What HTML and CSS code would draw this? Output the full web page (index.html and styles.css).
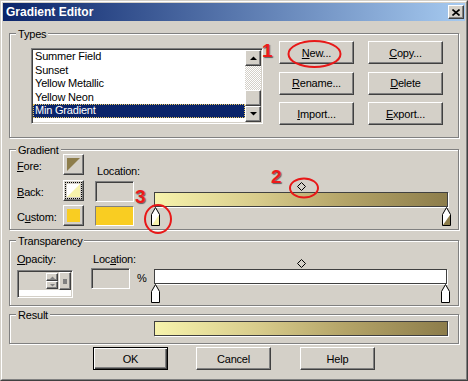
FILE: index.html
```html
<!DOCTYPE html>
<html>
<head>
<title>Gradient Editor</title>
<link rel="stylesheet" href="styles.css">
</head>

<body>

<div class="window">
<div class="frame">

<div class="titleBar">
<span class="titleText">Gradient Editor</span>
<span class="closeBtn raised">
<svg width="8" height="7" viewBox="0 0 8 7"><path d="M0.5 0.5 L7.5 6.5 M7.5 0.5 L0.5 6.5" stroke="#000" stroke-width="1.6"/></svg>
</span>
</div>

<div class="content">

<div class="group typesGroup">
<span class="groupLabel">Types</span>
<div class="listBox">
<div class="listItems">
<div class="listItem">Summer Field</div>
<div class="listItem">Sunset</div>
<div class="listItem">Yellow Metallic</div>
<div class="listItem">Yellow Neon</div>
<div class="listItem selected">Min Gradient</div>
</div>
<div class="scrollBar">
<div class="scrollBtn raised">
<svg width="7" height="4" viewBox="0 0 7 4"><path d="M0 4 L7 4 L3.5 0.5 Z" fill="#000"/></svg>
</div>
<div class="scrollTrack"></div>
<div class="scrollThumb raised"></div>
<div class="scrollBtn raised">
<svg width="7" height="4" viewBox="0 0 7 4"><path d="M0 0 L7 0 L3.5 3.5 Z" fill="#000"/></svg>
</div>
</div>
</div>
<div class="typeButtons">
<button class="btn"><u>N</u>ew...</button>
<button class="btn"><u>C</u>opy...</button>
<button class="btn"><u>R</u>ename...</button>
<button class="btn"><u>D</u>elete</button>
<button class="btn"><u>I</u>mport...</button>
<button class="btn"><u>E</u>xport...</button>
</div>
</div>

<div class="group gradientGroup">
<span class="groupLabel">Gradient</span>
<div class="swatchGrid">
<span class="swatchLabel"><u>F</u>ore:</span>
<span class="swatchBtn raised">
<svg width="13" height="13" viewBox="0 0 13 13"><path d="M0 0 H13 L0 13 Z" fill="#8d7d4b"/></svg>
</span>
<span class="swatchLabel"><u>B</u>ack:</span>
<span class="swatchBtn raised focused">
<svg width="13" height="13" viewBox="0 0 13 13"><rect width="13" height="13" fill="#fff"/><path d="M13 0 V13 H0 Z" fill="#f7f3ac"/></svg>
</span>
<span class="swatchLabel">C<u>u</u>stom:</span>
<span class="swatchBtn raised">
<span class="customChip"></span>
</span>
</div>
<div class="locCol">
<span class="locLabel">Location:</span>
<span class="field"></span>
<span class="customSwatch"></span>
</div>
<div class="barWrap">
<svg class="diamond" width="9" height="9" viewBox="0 0 9 9"><path d="M4.5 0.5 L8.5 4.5 L4.5 8.5 L0.5 4.5 Z" fill="none" stroke="#000"/></svg>
<div class="bar gradientFill"></div>
<svg class="stop stopLeft" width="11" height="20" viewBox="0 0 11 20">
<path d="M5.5 0.5 L9.5 7.5 V18.5 H1.5 V7.5 Z" fill="#fff" stroke="#000"/>
<path d="M9 8 V18 H2 Z" fill="#f7f3ac"/>
</svg>
<svg class="stop stopRight" width="11" height="20" viewBox="0 0 11 20">
<path d="M5.5 0.5 L9.5 7.5 V18.5 H1.5 V7.5 Z" fill="#fff" stroke="#000"/>
<path d="M9 8 V18 H2 Z" fill="#8d7d4b"/>
</svg>
</div>
</div>

<div class="group transGroup">
<span class="groupLabel">Transparency</span>
<div class="opacityCol">
<span class="colLabel"><u>O</u>pacity:</span>
<div class="spinBox">
<div class="spinTop">
<span class="spinEdit"></span>
<span class="spinArrows">
<span class="spinArrow raised"><svg width="5" height="3" viewBox="0 0 5 3"><path d="M0 3 H5 L2.5 0.5 Z" fill="#808080"/></svg></span>
<span class="spinArrow raised"><svg width="5" height="3" viewBox="0 0 5 3"><path d="M0 0 H5 L2.5 2.5 Z" fill="#808080"/></svg></span>
</span>
<span class="spinSlider raised"><span class="sliderDot"></span></span>
</div>
<div class="spinBottom"></div>
</div>
</div>
<div class="transLocCol">
<span class="locLabel">Loc<u>a</u>tion:</span>
<span class="field transField"></span>
</div>
<span class="pct">%</span>
<div class="barWrap transBar">
<svg class="diamond" width="9" height="9" viewBox="0 0 9 9"><path d="M4.5 0.5 L8.5 4.5 L4.5 8.5 L0.5 4.5 Z" fill="none" stroke="#000"/></svg>
<div class="bar whiteFill"></div>
<svg class="stop stopLeft" width="11" height="20" viewBox="0 0 11 20">
<path d="M5.5 0.5 L9.5 7.5 V18.5 H1.5 V7.5 Z" fill="#fff" stroke="#000"/>
</svg>
<svg class="stop stopRight" width="11" height="20" viewBox="0 0 11 20">
<path d="M5.5 0.5 L9.5 7.5 V18.5 H1.5 V7.5 Z" fill="#fff" stroke="#000"/>
</svg>
</div>
</div>

<div class="group resultGroup">
<span class="groupLabel">Result</span>
<div class="bar gradientFill resultBar"></div>
</div>

<div class="dialogButtons">
<button class="btn defaultBtn">OK</button>
<button class="btn cancelBtn">Cancel</button>
<button class="btn helpBtn">Help</button>
</div>

</div>
</div>

<!-- red tutorial markings drawn over the dialog -->
<svg class="annotations" width="468" height="381" viewBox="0 0 468 381">
<ellipse cx="313.5" cy="53" rx="26" ry="13" fill="none" stroke="#e81818" stroke-width="2"/>
<ellipse cx="303" cy="187" rx="14" ry="9.5" fill="none" stroke="#e81818" stroke-width="2"/>
<ellipse cx="157" cy="218" rx="13" ry="14" fill="none" stroke="#e81818" stroke-width="2"/>
</svg>
<span class="mark markOne">1</span>
<span class="mark markTwo">2</span>
<span class="mark markThree">3</span>

</div>

</body>
</html>
```

FILE: styles.css
```css
body {
    margin: 0;
    background: #d4d0c8;
    font: 11px "Liberation Sans", Arial, sans-serif;
    letter-spacing: -0.2px;
    color: #000;
}
.window {
    position: relative;
    width: 468px;
    height: 381px;
    box-sizing: border-box;
    border: 1px solid;
    border-color: #d4d0c8 #404040 #404040 #d4d0c8;
}
.frame {
    height: 100%;
    box-sizing: border-box;
    border: 1px solid;
    border-color: #fff #808080 #808080 #fff;
    padding: 1px;
}
.raised {
    box-sizing: border-box;
    background: #d4d0c8;
    border: 1px solid;
    border-color: #fff #404040 #404040 #fff;
    box-shadow: inset -1px -1px 0 #808080;
}
.titleBar {
    height: 18px;
    display: flex;
    align-items: center;
    justify-content: space-between;
    padding: 0 1px 0 3px;
    background: linear-gradient(to right, #0a246a, #a6caf0);
}
.titleText {
    color: #fff;
    font-weight: bold;
    font-size: 12px;
    letter-spacing: 0;
}
.closeBtn {
    width: 16px;
    height: 14px;
    display: flex;
    align-items: center;
    justify-content: center;
}
.content {
    padding: 12px 6px 0;
}
.group {
    position: relative;
    box-sizing: border-box;
    border: 1px solid #808080;
    box-shadow: 1px 1px 0 #fff, inset 1px 1px 0 #fff;
}
.groupLabel {
    position: absolute;
    top: -6px;
    left: 6px;
    padding: 0 2px;
    line-height: 13px;
    background: #d4d0c8;
}

/* Types */
.typesGroup {
    height: 105px;
    display: flex;
    align-items: flex-start;
    padding-left: 21px;
}
.listBox {
    margin-top: 14px;
    width: 232px;
    height: 76px;
    box-sizing: border-box;
    display: flex;
    padding: 1px;
    background: #fff;
    border: 1px solid;
    border-color: #808080 #fff #fff #808080;
    box-shadow: inset 1px 1px 0 #404040, inset -1px -1px 0 #d4d0c8;
}
.listItems {
    flex: 1;
}
.listItem {
    line-height: 13.5px;
    padding-left: 2px;
    white-space: nowrap;
}
.listItem.selected {
    background: #0a246a;
    color: #fff;
    outline: 1px dotted #e8c860;
    outline-offset: -1px;
}
.scrollBar {
    width: 16px;
    display: flex;
    flex-direction: column;
}
.scrollBtn {
    height: 16px;
    display: flex;
    align-items: center;
    justify-content: center;
}
.scrollTrack {
    flex: 1;
    background: repeating-conic-gradient(#fff 0 25%, #d4d0c8 0 50%) 0 0 / 2px 2px;
}
.scrollThumb {
    height: 16px;
}
.typeButtons {
    margin: 7px 0 0 16px;
    display: grid;
    grid-template-columns: 75px 75px;
    grid-auto-rows: 23px;
    column-gap: 14px;
    row-gap: 7.5px;
}
.btn {
    font: inherit;
    letter-spacing: inherit;
    margin: 0;
    padding: 0;
    color: #000;
    background: #d4d0c8;
    border: 1px solid;
    border-color: #fff #404040 #404040 #fff;
    box-shadow: inset -1px -1px 0 #808080;
}

/* Gradient */
.gradientGroup {
    margin-top: 11px;
    height: 81px;
    display: flex;
    align-items: flex-start;
    padding-left: 7px;
}
.swatchGrid {
    margin-top: 4px;
    display: grid;
    grid-template-columns: 46px 21px;
    grid-auto-rows: 21px;
    row-gap: 4.5px;
}
.swatchLabel {
    padding-top: 3px;
    line-height: 18px;
}
.swatchBtn {
    display: flex;
    align-items: center;
    justify-content: center;
}
.swatchBtn.focused {
    outline: 1px dotted #000;
    outline-offset: -3px;
}
.customChip {
    width: 13px;
    height: 13px;
    background: #f9cd22;
}
.locCol {
    margin: 4px 0 0 11px;
    width: 39px;
    display: flex;
    flex-direction: column;
}
.locLabel,
.colLabel {
    line-height: 13px;
    white-space: nowrap;
}
.locCol .locLabel {
    margin-top: 11px;
    padding-left: 2px;
}
.field {
    height: 21px;
    box-sizing: border-box;
    border: 1px solid;
    border-color: #808080 #fff #fff #808080;
    box-shadow: inset 1px 1px 0 #404040, inset -1px -1px 0 #d4d0c8;
}
.locCol .field {
    margin-top: 3px;
}
.customSwatch {
    margin-top: 4px;
    height: 20px;
    box-sizing: border-box;
    background: #f9cd22;
    border: 1px solid;
    border-color: #808080 #fff #fff #808080;
}
.barWrap {
    position: relative;
    margin: 42px 0 0 20px;
    width: 294px;
}
.bar {
    height: 15px;
    box-sizing: border-box;
    border: 1px solid #404040;
    box-shadow: 1px 1px 0 #fff;
}
.gradientFill {
    background: linear-gradient(to right, #f7f3ac, #d8cc8c 35%, #b4a468 65%, #8d7d4b);
}
.whiteFill {
    background: #fff;
}
.diamond {
    position: absolute;
    left: 50%;
    top: -10px;
    margin-left: -4px;
}
.stop {
    position: absolute;
    top: 15px;
}
.stopLeft {
    left: -4px;
}
.stopRight {
    right: -4px;
}

/* Transparency */
.transGroup {
    margin-top: 10px;
    height: 66px;
    display: flex;
    align-items: flex-start;
    padding-left: 7px;
}
.opacityCol {
    width: 56px;
    margin-top: 12px;
    display: flex;
    flex-direction: column;
}
.spinBox {
    margin-top: 4px;
    height: 28px;
    box-sizing: border-box;
    display: flex;
    flex-direction: column;
    padding: 1px;
    border: 1px solid;
    border-color: #808080 #fff #fff #808080;
    box-shadow: inset 1px 1px 0 #404040, inset -1px -1px 0 #d4d0c8;
}
.spinTop {
    height: 18px;
    display: flex;
}
.spinEdit {
    flex: 1;
}
.spinArrows {
    width: 12px;
    margin: 1px 1px 0 0;
    display: flex;
    flex-direction: column;
}
.spinArrow {
    height: 8px;
    display: flex;
    align-items: center;
    justify-content: center;
}
.spinSlider {
    width: 12px;
    display: flex;
    align-items: center;
    justify-content: center;
}
.sliderDot {
    width: 4px;
    height: 5px;
    background: #808080;
}
.spinBottom {
    flex: 1;
    background: #fff;
}
.transLocCol {
    margin: 12px 0 0 18px;
    width: 39px;
    display: flex;
    flex-direction: column;
}
.transLocCol .locLabel {
    padding-left: 2px;
}
.transField {
    margin-top: 2px;
}
.pct {
    margin: 31px 0 0 7px;
    width: 10px;
    line-height: 13px;
}
.transBar {
    margin: 28px 0 0 7px;
    width: 293px;
}

/* Result */
.resultGroup {
    margin-top: 8px;
    height: 30px;
    padding: 6px 0 0 144px;
}
.resultBar {
    width: 294px;
}

/* Dialog buttons */
.dialogButtons {
    margin-top: 3px;
    display: flex;
    padding-left: 84px;
}
.dialogButtons .btn {
    width: 75px;
    height: 23px;
}
.defaultBtn {
    border-color: #000;
    box-shadow: inset 1px 1px 0 #fff, inset -1px -1px 0 #404040, inset -2px -2px 0 #808080;
}
.cancelBtn {
    margin-left: 28px;
}
.helpBtn {
    margin-left: 29px;
}

/* red markings */
.annotations {
    position: absolute;
    left: 0;
    top: 0;
    pointer-events: none;
}
.mark {
    position: absolute;
    font: bold 19px "Liberation Sans", Arial, sans-serif;
    line-height: 19px;
    letter-spacing: 0;
    color: #ee1a1a;
    text-shadow: 1px 1px 1px #606060;
}
.markOne {
    left: 261px;
    top: 40px;
}
.markTwo {
    left: 270px;
    top: 166px;
}
.markThree {
    left: 134px;
    top: 186px;
}
```
